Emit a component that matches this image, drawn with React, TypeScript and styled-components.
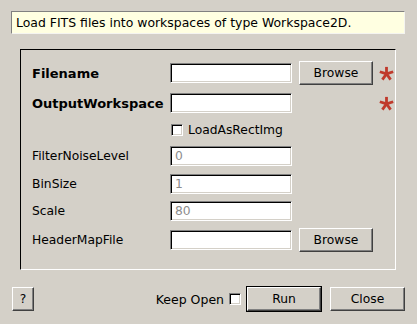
import styled, { createGlobalStyle } from "styled-components";

const GlobalStyle = createGlobalStyle`
  html, body {
    margin: 0;
    padding: 0;
    background: #d4d0c8;
  }
  * {
    box-sizing: border-box;
  }
`;

const Dialog = styled.div`
  width: 417px;
  height: 324px;
  padding: 11px 12px 0 11px;
  display: flex;
  flex-direction: column;
  background: #d4d0c8;
  font-family: "DejaVu Sans", "Liberation Sans", sans-serif;
  font-size: 12px;
  color: #000;
`;

const Description = styled.div`
  height: 23px;
  display: flex;
  align-items: center;
  padding-left: 4px;
  font-size: 12.45px;
  background: #ffffe1;
  border-top: 1px solid #808080;
  border-left: 1px solid #808080;
  border-right: 1px solid #f4f4f0;
  border-bottom: 1px solid #f4f4f0;
  white-space: nowrap;
`;

const GroupBox = styled.div`
  margin: 15px 9px 0 9px;
  height: 221px;
  padding: 11px 1px 0 11px;
  border-top: 1px solid #000;
  border-left: 1px solid #000;
  border-right: 1px solid #fff;
  border-bottom: 1px solid #fff;
  display: grid;
  grid-template-columns: 138px 122px 81px 22px;
  grid-template-rows: 24px 24px 18px 22px 21px 22px 24px;
  row-gap: 6px;
  align-items: center;
  align-content: start;
`;

const Label = styled.div<{ $bold?: boolean }>`
  grid-column: 1;
  font-weight: ${({ $bold }) => ($bold ? "bold" : "normal")};
  font-size: ${({ $bold }) => ($bold ? "13px" : "12.3px")};
  white-space: nowrap;
`;

const TextInput = styled.div<{ $disabled?: boolean }>`
  grid-column: 2;
  height: 20px;
  background: #fff;
  border-top: 1px solid #808080;
  border-left: 1px solid #808080;
  border-right: 1px solid #fff;
  border-bottom: 1px solid #fff;
  box-shadow: inset 1px 1px 0 #000, inset -1px -1px 0 #d4d0c8;
  padding-left: 4px;
  display: flex;
  align-items: center;
  font-size: 12.3px;
  color: ${({ $disabled }) => ($disabled ? "#8c8c8c" : "#000")};
`;

const Button = styled.div<{ $default?: boolean; $width: number }>`
  width: ${({ $width }) => $width}px;
  height: 24px;
  display: flex;
  align-items: center;
  justify-content: center;
  font-size: 12.3px;
  background: #d4d0c8;
  border-top: 1px solid #fff;
  border-left: 1px solid #fff;
  border-right: 1px solid #404040;
  border-bottom: 1px solid #404040;
  box-shadow: inset -1px -1px 0 #808080;
  outline: ${({ $default }) => ($default ? "1px solid #000" : "none")};
  outline-offset: 0;
  white-space: nowrap;
  cursor: default;
`;

const BrowseCell = styled.div`
  grid-column: 3;
  justify-self: end;
`;

const StarCell = styled.div`
  grid-column: 4;
  justify-self: end;
  display: flex;
  padding-right: 1px;
`;

const CheckRow = styled.label`
  grid-column: 2 / span 3;
  display: flex;
  align-items: center;
  gap: 5px;
  padding-left: 1px;
  font-size: 12.3px;
`;

const CheckBox = styled.span`
  width: 12px;
  height: 12px;
  background: #fff;
  border-top: 1px solid #808080;
  border-left: 1px solid #808080;
  border-right: 1px solid #fff;
  border-bottom: 1px solid #fff;
  box-shadow: inset 1px 1px 0 #000, inset -1px -1px 0 #d4d0c8;
  flex: none;
`;

const Footer = styled.div`
  margin-top: 17px;
  padding-left: 1px;
  display: flex;
  align-items: center;
`;

const Spacer = styled.div`
  flex: 1;
`;

const KeepOpen = styled.label`
  display: flex;
  align-items: center;
  gap: 5px;
  margin-right: 6px;
  font-size: 12.5px;
`;

const ButtonGap = styled.div`
  width: 9px;
`;

const Star = () => (
  <svg width="15" height="15" viewBox="0 0 15 15">
    <g stroke="#c0392b" strokeWidth="2.8" strokeLinecap="butt">
      {[-90, -18, 54, 126, 198].map((a) => {
        const r = (a * Math.PI) / 180;
        return (
          <line
            key={a}
            x1="7.5"
            y1="7.9"
            x2={7.5 + 7 * Math.cos(r)}
            y2={7.9 + 7 * Math.sin(r)}
          />
        );
      })}
    </g>
  </svg>
);

export default function App() {
  return (
    <>
      <GlobalStyle />
      <Dialog>
        <Description>Load FITS files into workspaces of type Workspace2D.</Description>
        <GroupBox>
          <Label $bold>Filename</Label>
          <TextInput />
          <BrowseCell>
            <Button $width={74}>Browse</Button>
          </BrowseCell>
          <StarCell>
            <Star />
          </StarCell>

          <Label $bold>OutputWorkspace</Label>
          <TextInput />
          <StarCell>
            <Star />
          </StarCell>

          <CheckRow>
            <CheckBox />
            LoadAsRectImg
          </CheckRow>

          <Label>FilterNoiseLevel</Label>
          <TextInput $disabled>0</TextInput>

          <Label>BinSize</Label>
          <TextInput $disabled>1</TextInput>

          <Label>Scale</Label>
          <TextInput $disabled>80</TextInput>

          <Label>HeaderMapFile</Label>
          <TextInput />
          <BrowseCell>
            <Button $width={74}>Browse</Button>
          </BrowseCell>
        </GroupBox>
        <Footer>
          <Button $width={22}>?</Button>
          <Spacer />
          <KeepOpen>
            Keep Open
            <CheckBox />
          </KeepOpen>
          <Button $width={74} $default>
            Run
          </Button>
          <ButtonGap />
          <Button $width={75}>Close</Button>
        </Footer>
      </Dialog>
    </>
  );
}
